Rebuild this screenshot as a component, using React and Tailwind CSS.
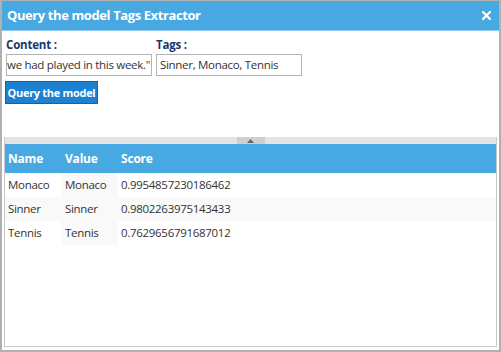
export default function App() {
  const rows = [
    ["Monaco", "Monaco", "0.9954857230186462"],
    ["Sinner", "Sinner", "0.9802263975143433"],
    ["Tennis", "Tennis", "0.7629656791687012"],
  ];
  return (
    <div className="w-[501px] h-[352px] bg-white flex flex-col border-l-2 border-r-2 border-b-2 border-t border-[#b0b0b0] overflow-hidden" style={{ fontFamily: '"Open Sans", sans-serif' }}>
      <div className="h-[30px] bg-[#48a8e2] flex items-center justify-between pl-[5px] pr-[8px] border-b border-[#8ec8ee]">
        <span className="text-white font-bold text-[13px] tracking-[-0.4px] leading-none">Query the model Tags Extractor</span>
        <svg width="9" height="9" viewBox="0 0 9 9">
          <path d="M1 1 L8 8 M8 1 L1 8" stroke="#fff" strokeWidth="2.2" strokeLinecap="square" />
        </svg>
      </div>
      <div className="flex gap-[4px] px-[4px] pt-[6px]">
        <div className="flex flex-col w-[146px]">
          <span className="text-[#17386b] font-bold text-[11.5px] tracking-[-0.2px] leading-[16px]">Content :</span>
          <div className="mt-[1px] h-[22px] border border-[#b3b3b3] flex items-center justify-end overflow-hidden whitespace-nowrap px-[1px] text-[11.5px] tracking-[-0.3px] text-[#333]">
            Sinner is the tennis player which we had played in this week."
          </div>
        </div>
        <div className="flex flex-col w-[146px]">
          <span className="text-[#17386b] font-bold text-[11.5px] tracking-[-0.2px] leading-[16px]">Tags :</span>
          <div className="mt-[1px] h-[22px] border border-[#b3b3b3] flex items-center overflow-hidden whitespace-nowrap px-[3px] text-[11.5px] tracking-[-0.3px] text-[#333]">
            Sinner, Monaco, Tennis
          </div>
        </div>
      </div>
      <div className="px-[3px] pt-[3px]">
        <button className="w-[93px] h-[23px] bg-[#1d80d0] border border-[#0f63a8] text-white font-bold text-[11px] tracking-[-0.3px] leading-none">
          Query the model
        </button>
      </div>
      <div className="flex-1 flex flex-col mt-[33px] mx-[2px] mb-[3px] border-l border-r border-b border-[#c8c8c8]">
        <div className="h-[7px] bg-[#e4e4e4] flex justify-center">
          <div className="w-[28px] h-[7px] bg-[#cfcfcf] flex items-center justify-center">
            <svg width="7" height="4" viewBox="0 0 7 4"><polygon points="3.5,0 7,4 0,4" fill="#666" /></svg>
          </div>
        </div>
        <div className="h-[29px] bg-[#48a8e2] flex items-center text-white font-bold text-[12px] tracking-[-0.2px]">
          <div className="w-[57px] pl-[3px]">Name</div>
          <div className="w-[56px] pl-[3px]">Value</div>
          <div className="pl-[3px]">Score</div>
        </div>
        {rows.map((r, i) => (
          <div key={i} className={`h-[24px] flex text-[11.5px] tracking-[-0.3px] text-[#333] ${i === 1 ? "bg-[#f9f9f9]" : "bg-white"}`}>
            <div className="w-[57px] pl-[3px] flex items-center">{r[0]}</div>
            <div className="w-[56px] pl-[3px] flex items-center bg-[#f9f9f9]">{r[1]}</div>
            <div className="pl-[3px] flex items-center">{r[2]}</div>
          </div>
        ))}
      </div>
    </div>
  );
}
